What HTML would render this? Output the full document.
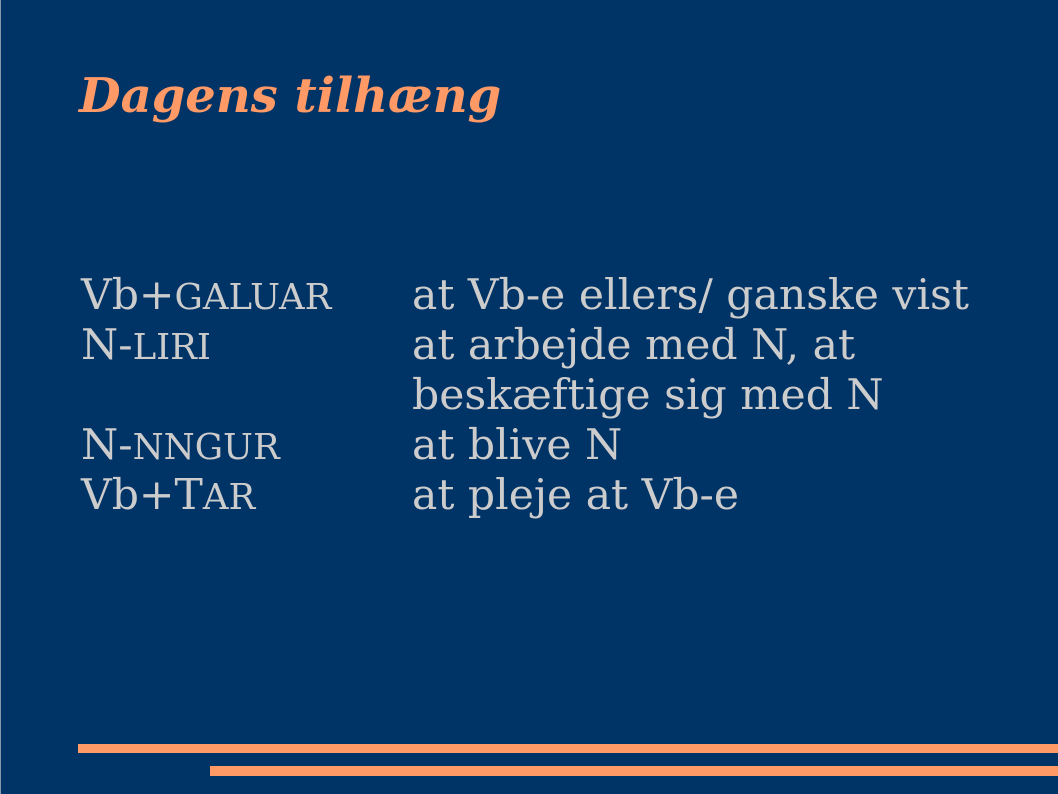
<!DOCTYPE html>
<html><head><meta charset="utf-8"><style>
html,body{margin:0;padding:0}
body{width:1058px;height:794px;background:#003366;position:relative;overflow:hidden;font-family:"DejaVu Serif",serif;border-left:1px solid #8899aa;box-sizing:border-box}
.t{position:absolute;left:78px;top:68px;font-size:48px;font-weight:bold;font-style:italic;color:#ff9966;white-space:nowrap}
.l{position:absolute;font-size:42.5px;color:#cccccc;white-space:nowrap;line-height:50px}
.sc{font-size:35.5px;line-height:0}
.bar{position:absolute;background:#ff9966;right:0}
</style></head><body>
<div class="t">Dagens tilhæng</div>
<div class="l" style="left:80px;top:271px">Vb+<span class="sc">GALUAR</span><br>N-<span class="sc">LIRI</span><br><br>N-<span class="sc">NNGUR</span><br>Vb+T<span class="sc">AR</span></div>
<div class="l" style="left:411px;top:271px">at Vb-e ellers/ ganske vist<br>at arbejde med N, at<br>beskæftige sig med N<br>at blive N<br>at pleje at Vb-e</div>
<div class="bar" style="left:77px;top:744px;height:9px"></div>
<div class="bar" style="left:209px;top:766px;height:10px"></div>
</body></html>
